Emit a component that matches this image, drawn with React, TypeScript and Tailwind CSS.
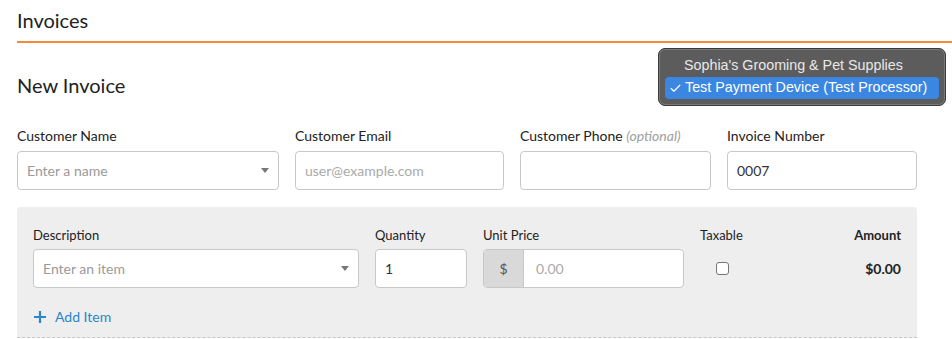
import { Check } from "lucide-react";

const Label = ({ children }: { children: React.ReactNode }) => (
  <div className="text-[14px] leading-[18px] text-[#222] mb-[6px]">{children}</div>
);

const Caret = () => (
  <span className="w-0 h-0 border-l-[4px] border-r-[4px] border-t-[5px] border-l-transparent border-r-transparent border-t-[#777]" />
);

const inputBox = "h-[39px] rounded-[4px] border border-[#c8c8c8] bg-white flex items-center px-[9px] text-[14px]";

const App = () => {
  return (
    <div className="relative w-[952px] h-[339px] overflow-hidden bg-white font-['Lato',sans-serif] text-[#222]">
      <div className="pl-[17px]">
        <div className="h-[41px] flex items-center text-[20px] pb-[2px]">Invoices</div>
        <div className="h-[2px] bg-[#f58a3d]" />
      </div>

      <div className="ml-[17px] w-[900px]">
        <h1 className="text-[20px] mt-[28px] h-[28px] leading-[28px]">New Invoice</h1>

        <div className="flex gap-[16px] mt-[28px]">
          <div className="w-[262px]">
            <Label>Customer Name</Label>
            <div className={inputBox + " justify-between text-[#9a9a9a]"}>
              <span>Enter a name</span>
              <Caret />
            </div>
          </div>
          <div className="w-[209px]">
            <Label>Customer Email</Label>
            <div className={inputBox + " text-[#aaa]"}>user@example.com</div>
          </div>
          <div className="w-[191px]">
            <Label>
              Customer Phone <i className="text-[#a0a0a0]">(optional)</i>
            </Label>
            <div className={inputBox} />
          </div>
          <div className="w-[190px]">
            <Label>Invoice Number</Label>
            <div className={inputBox + " text-[#333]"}>0007</div>
          </div>
        </div>

        <div className="mt-[17px] bg-[#eeeeee] rounded-t-[4px] px-[16px] pt-[20px] h-[131px] border-b border-dashed border-[#c8c8c8]">
          <div className="flex items-start text-[13px]">
            <div className="w-[326px]">
              <div className="text-[13px] leading-[16px] mb-[6px]">Description</div>
              <div className={inputBox + " justify-between text-[#9a9a9a]"}>
                <span>Enter an item</span>
                <Caret />
              </div>
            </div>
            <div className="w-[92px] ml-[16px]">
              <div className="text-[13px] leading-[16px] mb-[6px]">Quantity</div>
              <div className={inputBox + " text-[#333]"}>1</div>
            </div>
            <div className="w-[201px] ml-[16px]">
              <div className="text-[13px] leading-[16px] mb-[6px]">Unit Price</div>
              <div className="h-[39px] rounded-[4px] border border-[#c8c8c8] bg-white flex text-[14px] overflow-hidden">
                <div className="w-[40px] bg-[#d9d9d9] border-r border-[#c8c8c8] flex items-center justify-center text-[#555]">$</div>
                <div className="flex items-center pl-[12px] text-[#aaa]">0.00</div>
              </div>
            </div>
            <div className="ml-[16px] w-[60px]">
              <div className="text-[13px] leading-[16px] mb-[6px]">Taxable</div>
              <div className="h-[39px] flex items-center pl-[16px]">
                <span className="w-[13px] h-[13px] rounded-[3px] border border-[#767676] bg-white" />
              </div>
            </div>
            <div className="flex-1 text-right">
              <div className="text-[13px] leading-[16px] mb-[6px] font-bold">Amount</div>
              <div className="h-[39px] flex items-center justify-end font-bold text-[14px]">$0.00</div>
            </div>
          </div>
          <div className="flex items-center gap-[8px] mt-[18px] text-[14px] text-[#2a86c8]">
            <svg width="14" height="14" viewBox="0 0 14 14">
              <path d="M7 1v12M1 7h12" stroke="#2a86c8" strokeWidth="2.2" />
            </svg>
            <span>Add Item</span>
          </div>
        </div>
      </div>

      <div className="absolute left-[658px] top-[48px] w-[288px] rounded-[7px] bg-[#5c5c5c] border border-[#3a3a3a] shadow-[0_0_0_1px_#7a7a7a_inset] px-[6px] py-[6px] font-['Liberation_Sans',sans-serif] text-[14.3px] text-[#e8e8e8]">
        <div className="h-[22px] flex items-center pl-[19px]">Sophia's Grooming &amp; Pet Supplies</div>
        <div className="h-[22px] flex items-center rounded-[4px] bg-[#3b86e0] text-white pl-[4px]">
          <Check size={13} strokeWidth={2.2} className="mr-[3px]" />
          Test Payment Device (Test Processor)
        </div>
      </div>
    </div>
  );
};

export default App;
